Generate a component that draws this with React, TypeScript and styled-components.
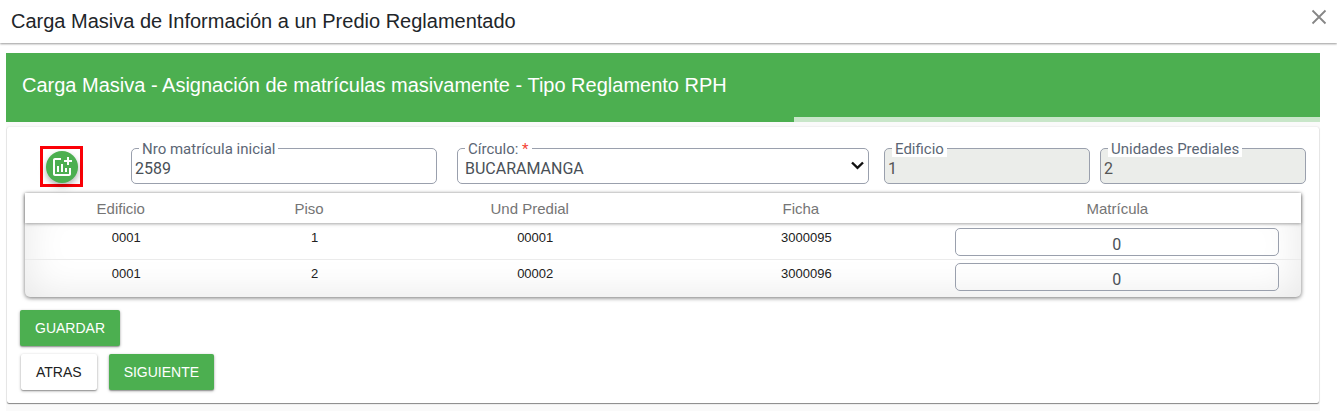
import React from "react";
import styled, { createGlobalStyle, css } from "styled-components";
import { MdAddchart } from "react-icons/md";

const GREEN = "#4caf50";
const SANS = '"Liberation Sans", Arial, sans-serif';
const ROBOTO = 'Roboto, "Liberation Sans", sans-serif';

const GlobalStyle = createGlobalStyle`
  *, *::before, *::after { box-sizing: border-box; }
  body { margin: 0; background: #fff; font-family: ${SANS}; color: #212529; }
`;

const DialogHeader = styled.header`
  display: flex;
  align-items: flex-start;
  justify-content: space-between;
  height: 43px;
  padding: 9px 10px 0 11px;
  background: #fff;
  box-shadow: 0 1px 2px rgba(0, 0, 0, 0.4);
`;

const DialogTitle = styled.h1`
  margin: 0;
  font-size: 20px;
  line-height: 24px;
  font-weight: 400;
`;

const CloseButton = styled.button`
  display: flex;
  padding: 0;
  border: 0;
  background: none;
  color: #868686;
  cursor: pointer;
`;

const Content = styled.main`
  margin: 10px 17px 0 6px;
  padding-bottom: 8px;
  background: #fafafa;
`;

const Banner = styled.div`
  display: flex;
  flex-direction: column;
  height: 69px;
  background: ${GREEN};
  color: #fff;
`;

const BannerTitle = styled.h2`
  flex: 1;
  margin: 0;
  padding: 20px 16px 0;
  font-size: 20px;
  line-height: 24px;
  font-weight: 400;
`;

const ProgressTrack = styled.div`
  height: 5px;
  background: #c8e6c9;
`;

const ProgressFill = styled.div`
  height: 100%;
  width: 60%;
  background: ${GREEN};
`;

const Card = styled.section`
  margin: 5px 1px 0;
  padding: 19px 13px 13px;
  background: #fff;
  border-radius: 2px;
  box-shadow: 0 1px 1px rgba(0, 0, 0, 0.45), 0 0 2px rgba(0, 0, 0, 0.14);
`;

const FieldRow = styled.div`
  display: grid;
  grid-template-columns: 101px 306fr 427fr 206fr 206fr;
  column-gap: 10px;
`;

const Highlight = styled.div`
  display: flex;
  align-items: center;
  justify-content: center;
  width: 43px;
  height: 41px;
  margin-left: 20px;
  border: 3px solid #fb0007;
`;

const RoundButton = styled.button`
  display: flex;
  align-items: center;
  justify-content: center;
  width: 32px;
  height: 32px;
  padding: 0;
  border: 0;
  border-radius: 50%;
  background: ${GREEN};
  color: #fff;
  box-shadow: 0 3px 5px rgba(0, 0, 0, 0.2), 0 4px 10px rgba(0, 0, 0, 0.12);
  cursor: pointer;
`;

const Field = styled.div<{ $inset?: boolean }>`
  position: relative;
  margin-top: 2px;
  ${(p) => p.$inset && css`margin-left: 10px; margin-right: 5px;`}
`;

const FieldLabel = styled.label`
  position: absolute;
  top: -7px;
  left: 8px;
  padding: 1px 3px 0;
  background: #fff;
  color: #5b6675;
  font: 15px/15px ${ROBOTO};
`;

const Required = styled.span`
  color: #f44336;
`;

const control = css`
  display: block;
  width: 100%;
  height: 36px;
  border: 1px solid #9aa0ad;
  border-radius: 5px;
  background: #fff;
  color: #495057;
  font: 16px/20px ${ROBOTO};
`;

const TextInput = styled.input`
  ${control}
  padding: 4px 3px 0;
  &:disabled { background: #ebedea; color: #545454; }
`;

const Select = styled.select`
  ${control}
  appearance: none;
  padding: 5px 24px 0 7px;
`;

const Chevron = styled.svg`
  position: absolute;
  top: 13px;
  right: 5px;
  pointer-events: none;
`;

const TableFrame = styled.div`
  margin: 6px 5px 0;
  padding-bottom: 2px;
  border-radius: 0 0 5px 5px;
  box-shadow: 0 1px 4px rgba(0, 0, 0, 0.55), inset 0 0 40px rgba(0, 0, 0, 0.1);
`;

const DataTable = styled.table`
  width: 100%;
  table-layout: fixed;
  border-collapse: separate;
  border-spacing: 0;
  thead { box-shadow: 0 1px 3px rgba(0, 0, 0, 0.35); }
`;

const HeadCell = styled.th`
  height: 30px;
  padding: 1px 10px 0 0;
  background: #fff;
  color: #757575;
  font-size: 15px;
  line-height: 18px;
  font-weight: 400;
`;

const Cell = styled.td`
  height: 36px;
  padding: 7px 0 0 1px;
  vertical-align: top;
  text-align: center;
  font-size: 13px;
  line-height: 16px;
  color: #212121;
  tr + tr > & { border-top: 1px solid #ebebeb; padding-top: 6px; }
`;

const InputCell = styled(Cell)`
  padding: 5px 22px 3px 11px;
  tr + tr > & { padding-top: 3px; }
`;

const CellInput = styled.input`
  ${control}
  height: 28px;
  padding: 5px 0 0;
  background: transparent;
  text-align: center;
`;

const Actions = styled.div`
  display: flex;
  gap: 12px;
  margin-top: 8px;
`;

const SaveActions = styled(Actions)`
  margin-top: 13px;
`;

const Button = styled.button<{ $plain?: boolean }>`
  height: 36px;
  padding: 0 15px;
  border: 0;
  border-radius: 2px;
  margin-left: ${(p) => (p.$plain ? "1px" : "0")};
  background: ${(p) => (p.$plain ? "#fff" : GREEN)};
  color: ${(p) => (p.$plain ? "#212121" : "#fff")};
  font: 14px ${SANS};
  box-shadow: 0 1px 3px rgba(0, 0, 0, 0.35), 0 1px 1px rgba(0, 0, 0, 0.2);
  cursor: pointer;
`;

const columns = [
  { name: "Edificio", width: "15.8%" },
  { name: "Piso", width: "13.7%" },
  { name: "Und Predial", width: "20.9%" },
  { name: "Ficha", width: "21.6%" },
  { name: "Matrícula", width: "28%" },
];

const rows = [
  { edificio: "0001", piso: "1", unidad: "00001", ficha: "3000095" },
  { edificio: "0001", piso: "2", unidad: "00002", ficha: "3000096" },
];

export default function App() {
  return (
    <>
      <GlobalStyle />
      <DialogHeader>
        <DialogTitle>Carga Masiva de Información a un Predio Reglamentado</DialogTitle>
        <CloseButton type="button" aria-label="Cerrar">
          <svg width="16" height="16" viewBox="0 0 16 16" stroke="currentColor" strokeWidth="1.8">
            <path d="M1.5 1.5 14.5 14.5M14.5 1.5 1.5 14.5" />
          </svg>
        </CloseButton>
      </DialogHeader>
      <Content>
        <Banner>
          <BannerTitle>Carga Masiva - Asignación de matrículas masivamente - Tipo Reglamento RPH</BannerTitle>
          <ProgressTrack role="progressbar" aria-label="Avance" aria-valuenow={60} aria-valuemin={0} aria-valuemax={100}>
            <ProgressFill />
          </ProgressTrack>
        </Banner>
        <Card>
          <FieldRow>
            <Highlight>
              <RoundButton type="button" aria-label="Asignar matrículas">
                <MdAddchart size={24} />
              </RoundButton>
            </Highlight>
            <Field>
              <TextInput id="matricula" defaultValue="2589" />
              <FieldLabel htmlFor="matricula">Nro matrícula inicial</FieldLabel>
            </Field>
            <Field $inset>
              <Select id="circulo" defaultValue="BUCARAMANGA">
                <option>BUCARAMANGA</option>
              </Select>
              <Chevron width="13" height="9" viewBox="0 0 13 9" fill="none" stroke="#111" strokeWidth="2.4" aria-hidden="true">
                <path d="M1 1.5 6.5 6.8 12 1.5" />
              </Chevron>
              <FieldLabel htmlFor="circulo">
                Círculo: <Required>*</Required>
              </FieldLabel>
            </Field>
            <Field>
              <TextInput id="edificio" defaultValue="1" disabled />
              <FieldLabel htmlFor="edificio">Edificio</FieldLabel>
            </Field>
            <Field>
              <TextInput id="unidades" defaultValue="2" disabled />
              <FieldLabel htmlFor="unidades">Unidades Prediales</FieldLabel>
            </Field>
          </FieldRow>
          <TableFrame>
            <DataTable>
              <colgroup>
                {columns.map((c) => (
                  <col key={c.name} width={c.width} />
                ))}
              </colgroup>
              <thead>
                <tr>
                  {columns.map((c) => (
                    <HeadCell key={c.name} scope="col">{c.name}</HeadCell>
                  ))}
                </tr>
              </thead>
              <tbody>
                {rows.map((r) => (
                  <tr key={r.ficha}>
                    <Cell>{r.edificio}</Cell>
                    <Cell>{r.piso}</Cell>
                    <Cell>{r.unidad}</Cell>
                    <Cell>{r.ficha}</Cell>
                    <InputCell>
                      <CellInput aria-label={`Matrícula ${r.ficha}`} defaultValue="0" />
                    </InputCell>
                  </tr>
                ))}
              </tbody>
            </DataTable>
          </TableFrame>
          <SaveActions>
            <Button type="button">GUARDAR</Button>
          </SaveActions>
          <Actions>
            <Button type="button" $plain>ATRAS</Button>
            <Button type="button">SIGUIENTE</Button>
          </Actions>
        </Card>
      </Content>
    </>
  );
}
